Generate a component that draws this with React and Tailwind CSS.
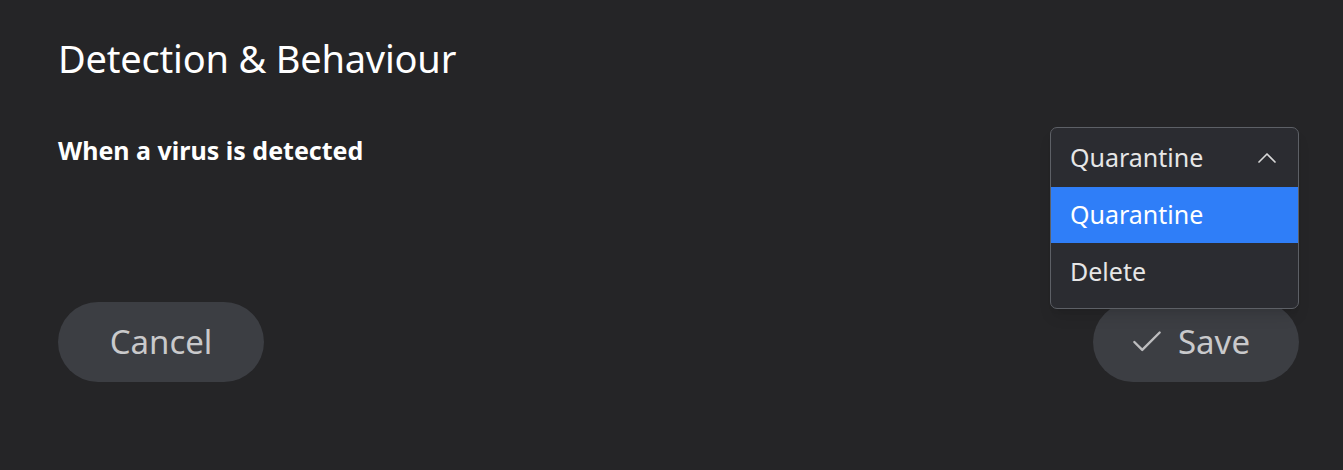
import { Check, ChevronUp } from 'lucide-react';

const font = { fontFamily: '"Noto Sans", "Open Sans", sans-serif' };

export default function App() {
  return (
    <div className="w-[1343px] h-[470px] bg-[#252527] text-white pl-[58px] pr-[44px] pt-[32px]" style={font}>
      <h1 className="text-[38px] leading-[52px] font-normal tracking-[-0.2px]">Detection &amp; Behaviour</h1>

      <div className="flex justify-between items-start mt-[43px]">
        <p className="text-[25px] font-bold leading-[34px] mt-[6px]">When a virus is detected</p>

        {/* Select (open) */}
        <div className="relative z-10 w-[249px]">
          <div className="rounded-[7px] border border-[#5d6066] bg-[#2b2c31] overflow-hidden shadow-lg">
            <div className="h-[59px] flex items-center justify-between pl-[19px] pr-[15px] text-[25px] text-[#e6e6e6]">
              <span>Quarantine</span>
              <ChevronUp size={32} strokeWidth={1.25} className="text-[#d8d8d8]" />
            </div>
            <div className="h-[56px] flex items-center pl-[19px] bg-[#2f7ef8] text-[25px] text-white">Quarantine</div>
            <div className="h-[58px] flex items-center pl-[19px] text-[25px] text-[#e6e6e6]">Delete</div>
            <div className="h-[7px]" />
          </div>
        </div>
      </div>

      <div className="flex justify-between mt-[-7px]">
        <button className="w-[206px] h-[80px] rounded-full bg-[#3c3e43] text-[33px] text-[#c9c9cb]">Cancel</button>
        <button className="w-[206px] h-[80px] rounded-full bg-[#3c3e43] text-[33px] text-[#c9c9cb] flex items-center justify-center gap-[12px] pr-[14px]">
          <Check size={38} strokeWidth={1.5} className="text-[#bdbdbf]" />
          <span>Save</span>
        </button>
      </div>
    </div>
  );
}
